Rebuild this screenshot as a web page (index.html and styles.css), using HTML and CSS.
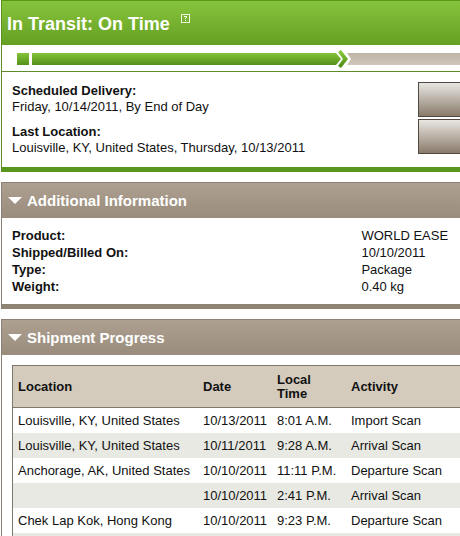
FILE: index.html
```html
<!DOCTYPE html>
<html lang="en">
<head>
<meta charset="utf-8">
<title>Shipment Tracking</title>
<link rel="stylesheet" href="styles.css">
</head>
<body>
<main class="page">
  <section class="panel panel-status">
    <header class="status-header">
      <h1>In Transit: On Time</h1>
      <a class="help" href="#help" aria-label="Help">
        <svg width="9" height="9" viewBox="0 0 9 9" shape-rendering="crispEdges" aria-hidden="true">
          <path d="M.5 .5h8v8h-8z" fill="none" stroke="#f0f8e4"/>
          <path d="M3 2h3v1h-3zM5 3h1v1h-1zM4 4h1v1h-1zM4 6h1v1h-1z" fill="#fff"/>
        </svg>
      </a>
    </header>
    <div class="progress">
      <span class="step-start"></span>
      <span class="step-done"></span>
      <svg class="step-arrow" width="16" height="18" viewBox="0 0 16 18" aria-hidden="true">
        <defs>
          <linearGradient id="green" gradientUnits="userSpaceOnUse" x1="0" y1="3" x2="0" y2="15">
            <stop offset="0" stop-color="#83c437"/>
            <stop offset="1" stop-color="#55901b"/>
          </linearGradient>
          <linearGradient id="taupe" gradientUnits="userSpaceOnUse" x1="0" y1="3" x2="0" y2="15">
            <stop offset="0" stop-color="#bfb4a5"/>
            <stop offset="1" stop-color="#d0c7bb"/>
          </linearGradient>
        </defs>
        <path d="M0 3h1l5 6-5 6h-1z" fill="url(#green)"/>
        <path d="M12 3h4v12h-4l4-6z" fill="url(#taupe)"/>
        <path d="M3 2l3-2 7 9-7 9-3-2 5-7z" fill="url(#green)"/>
      </svg>
      <span class="step-left"></span>
    </div>
    <div class="status-body">
      <dl class="summary">
        <dt>Scheduled Delivery:</dt>
        <dd>Friday, 10/14/2011, By End of Day</dd>
        <dt>Last Location:</dt>
        <dd>Louisville, KY, United States, Thursday, 10/13/2011</dd>
      </dl>
      <div class="actions">
        <button type="button" aria-label="First action"></button>
        <button type="button" aria-label="Second action"></button>
      </div>
    </div>
  </section>

  <section class="panel">
    <h2 class="panel-title"><span class="arrow"></span>Additional Information</h2>
    <dl class="facts">
      <dt>Product:</dt><dd>WORLD EASE</dd>
      <dt>Shipped/Billed On:</dt><dd>10/10/2011</dd>
      <dt>Type:</dt><dd>Package</dd>
      <dt>Weight:</dt><dd>0.40 kg</dd>
    </dl>
  </section>

  <section class="panel">
    <h2 class="panel-title"><span class="arrow"></span>Shipment Progress</h2>
    <div class="table-wrap">
      <table>
        <colgroup><col class="c-location"><col class="c-date"><col class="c-time"><col></colgroup>
        <thead>
          <tr><th scope="col">Location</th><th scope="col">Date</th><th scope="col">Local<br>Time</th><th scope="col">Activity</th></tr>
        </thead>
        <tbody>
          <tr><td>Louisville, KY, United States</td><td>10/13/2011</td><td>8:01 A.M.</td><td>Import Scan</td></tr>
          <tr><td>Louisville, KY, United States</td><td>10/11/2011</td><td>9:28 A.M.</td><td>Arrival Scan</td></tr>
          <tr><td>Anchorage, AK, United States</td><td>10/10/2011</td><td>11:11 P.M.</td><td>Departure Scan</td></tr>
          <tr><td></td><td>10/10/2011</td><td>2:41 P.M.</td><td>Arrival Scan</td></tr>
          <tr><td>Chek Lap Kok, Hong Kong</td><td>10/10/2011</td><td>9:23 P.M.</td><td>Departure Scan</td></tr>
          <tr><td></td><td></td><td></td><td></td></tr>
        </tbody>
      </table>
    </div>
  </section>
</main>
</body>
</html>
```
FILE: styles.css
```css
* { box-sizing: border-box; }

html { overflow: hidden; }

body {
  margin: 0;
  background: #fff;
  color: #111;
  font: 13px/16px "Liberation Sans", Arial, sans-serif;
}

h1, h2, dl, dd { margin: 0; }

dt, th { font-weight: bold; }

.page {
  display: flex;
  flex-direction: column;
  gap: 10px;
  padding-left: 1px;
}

.panel {
  border-left: 1px solid #8c8172;
  border-bottom: 5px solid #8f8374;
}

.panel-status {
  border-left-color: #5a8f22;
  border-bottom-color: #58951c;
}

.status-header {
  display: flex;
  align-items: flex-start;
  gap: 11px;
  height: 45px;
  padding: 13px 5px 0;
  border-top: 1px solid #5a9618;
  background: linear-gradient(#87c43c, #65a023);
}

h1 {
  color: #fff;
  font-size: 18px;
  line-height: 20px;
}

.help { display: block; }

.help svg { display: block; }

.progress {
  display: flex;
  align-items: center;
  height: 27px;
  padding: 1px 0 0 15px;
  border-bottom: 1px solid #5e8a2a;
}

.step-start,
.step-done,
.step-left { height: 12px; }

.step-start,
.step-done { background: linear-gradient(#83c437, #55901b); }

.step-start {
  width: 12px;
  margin-right: 3px;
}

.step-done { flex: 303; }

.step-left {
  flex: 109;
  background: linear-gradient(#bfb4a5, #d0c7bb);
}

.status-body {
  display: flex;
  justify-content: space-between;
  padding: 10px 0 11px 10px;
}

.summary { padding-top: 1px; }

.summary dd { margin-bottom: 9px; }

.summary dd:last-child { margin-bottom: 0; }

.actions {
  display: flex;
  flex-direction: column;
  gap: 2px;
}

.actions button {
  width: 42px;
  height: 35px;
  padding: 0;
  border: 1px solid #51493f;
  border-right: 0;
  background: linear-gradient(#e8e6e2, #8a7b6b);
}

.panel-title {
  display: flex;
  align-items: center;
  gap: 5px;
  height: 36px;
  padding-left: 6px;
  border-top: 1px solid #8c8172;
  background: linear-gradient(#ada090, #998c7c);
  color: #fff;
  font-size: 15px;
  line-height: 18px;
}

.arrow {
  border: 7px solid transparent;
  border-top-color: #fff;
  border-bottom: 0;
}

.facts {
  display: grid;
  grid-template-columns: 78% 1fr;
  row-gap: 1px;
  padding: 10px 0 9px 10px;
}

.table-wrap { padding: 10px 0 0 10px; }

table {
  width: 100%;
  table-layout: fixed;
  border-collapse: separate;
  border-spacing: 0;
  border-top: 1px solid #7e776c;
  border-left: 1px solid #7e776c;
}

.c-location { width: 185px; }
.c-date { width: 74px; }
.c-time { width: 74px; }

th, td {
  padding: 0 0 0 5px;
  text-align: left;
  white-space: nowrap;
}

th {
  height: 42px;
  border-bottom: 1px solid #7e776c;
  background: #d4cbbd;
  line-height: 14px;
}

td { height: 25px; }

tbody tr:nth-child(even) { background: #e8e9e3; }
```
